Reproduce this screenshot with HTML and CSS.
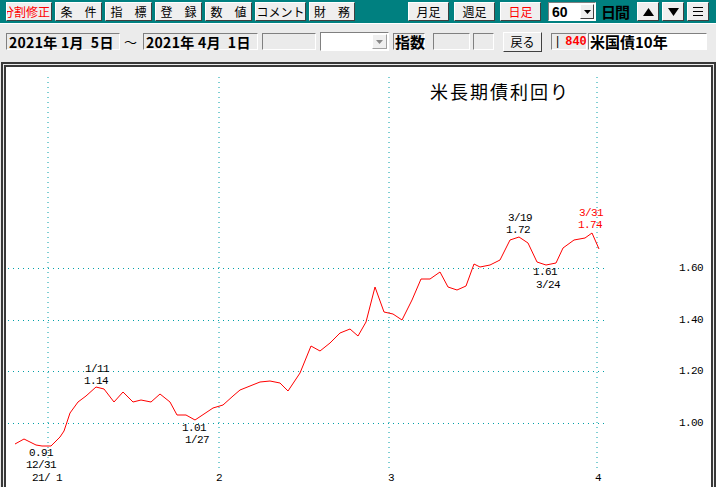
FILE: index.html
```html
<!DOCTYPE html>
<html lang="ja">
<head>
<meta charset="utf-8">
<title>米長期債利回り</title>
<link rel="stylesheet" href="styles.css">
</head>
<body>
<div class="topbar">
  <div class="group-left">
    <div class="tb-btn w46 red right">分割修正</div>
    <div class="tb-btn w47">条　件</div>
    <div class="tb-btn w47">指　標</div>
    <div class="tb-btn w47">登　録</div>
    <div class="tb-btn w47">数　値</div>
    <div class="tb-btn w51">コメント</div>
    <div class="tb-btn w46">財　務</div>
  </div>
  <div class="group-right">
    <div class="tb-btn w41">月足</div>
    <div class="tb-btn w41">週足</div>
    <div class="tb-btn w41 red">日足</div>
    <div class="select">
      <span class="select-val">60</span>
      <span class="select-arrow"><svg width="7" height="4" viewBox="0 0 7 4"><path d="M0 0H7L3.5 4Z" fill="#000"/></svg></span>
    </div>
    <div class="days">日間</div>
    <div class="tb-btn w22 arrows">
      <svg width="11" height="8" viewBox="0 0 11 8"><path d="M5.5 0L11 8H0Z" fill="#000"/></svg>
    </div>
    <div class="tb-btn w22 arrows">
      <svg width="11" height="8" viewBox="0 0 11 8"><path d="M0 0H11L5.5 8Z" fill="#000"/></svg>
    </div>
    <div class="tb-btn w22 arrows">
      <svg width="10" height="9" viewBox="0 0 10 9"><path d="M0 0.5H10M0 4.5H10M0 8.5H10" stroke="#000" stroke-width="1"/></svg>
    </div>
  </div>
</div>

<div class="row2">
  <div class="sunken date">2021年 1月  5日</div>
  <div class="tilde">～</div>
  <div class="sunken date date2">2021年 4月  1日</div>
  <div class="sunken empty1"></div>
  <div class="combo">
    <span class="combo-arrow"><svg width="7" height="4" viewBox="0 0 7 4"><path d="M0 0H7L3.5 4Z" fill="#888"/></svg></span>
  </div>
  <div class="sunken label">指数</div>
  <div class="sunken empty2"></div>
  <div class="sunken empty3"></div>
  <div class="back-btn">戻る</div>
  <div class="sunken code"><span class="bar">|</span><span class="num">840</span></div>
  <div class="sunken name">米国債10年</div>
</div>

<div class="chart">
  <svg class="plot" width="705" height="420" viewBox="6 67 705 420">
    <g class="grid" stroke="#00a0a8" stroke-width="1" stroke-dasharray="1 4" fill="none">
      <path d="M48 77V468M219 77V468M389 77V468M597 77V468"/>
      <path d="M8 268.5H607M8 320.5H607M8 371.5H607M8 423.5H607"/>
    </g>
    <polyline fill="none" stroke="#ff0000" stroke-width="1"
      points="15,444 24,439 30,442 36,445 42,446 51,446 60,437 64,431 70,413 78,402 86,396 96,387 104,389 114,402 123,392 133,402 141,400 151,402 160,394 170,402 177,415 186,415 195,420 204,414 213,408 223,405 233,396 240,390 250,386 260,382 270,381 280,383 288,391 300,373 311,346 320,351 330,343 340,333 350,329 358,336 366,322 375,287 384,312 393,314 402,320 412,300 421,279 430,279 440,272 448,287 457,290 466,286 474,264 480,267 490,265 500,260 510,240 519,237 528,243 537,262 546,265 556,263 563,248 574,240 585,238 592,233 599,249"/>
    <text class="title" x="430" y="91">米長期債利回り</text>
    <g class="lbl">
      <text x="97" y="369" text-anchor="middle">1/11</text>
      <text x="96" y="381" text-anchor="middle">1.14</text>
      <text x="41" y="453" text-anchor="middle">0.91</text>
      <text x="41" y="465" text-anchor="middle">12/31</text>
      <text x="32" y="478">21/ 1</text>
      <text x="194" y="428" text-anchor="middle">1.01</text>
      <text x="197" y="440" text-anchor="middle">1/27</text>
      <text x="520" y="218" text-anchor="middle">3/19</text>
      <text x="518" y="230" text-anchor="middle">1.72</text>
      <text x="591" y="213" text-anchor="middle" class="redtxt">3/31</text>
      <text x="590" y="225" text-anchor="middle" class="redtxt">1.74</text>
      <text x="545" y="272" text-anchor="middle">1.61</text>
      <text x="548" y="285" text-anchor="middle">3/24</text>
      <text x="219" y="478" text-anchor="middle">2</text>
      <text x="391" y="478" text-anchor="middle">3</text>
      <text x="598" y="478" text-anchor="middle">4</text>
      <text x="703" y="268" text-anchor="end">1.60</text>
      <text x="703" y="320" text-anchor="end">1.40</text>
      <text x="703" y="371" text-anchor="end">1.20</text>
      <text x="703" y="423" text-anchor="end">1.00</text>
    </g>
  </svg>
</div>
</body>
</html>
```

FILE: styles.css
```css
html, body {
  margin: 0;
  padding: 0;
}
body {
  width: 716px;
  height: 487px;
  overflow: hidden;
  background: #ebebeb;
  font-family: "Noto Sans CJK JP", "Noto Sans", sans-serif;
  color: #000;
}

/* top teal toolbar */
.topbar {
  height: 23px;
  background: #008080;
  border-bottom: 1px solid #ffffff;
  display: flex;
  align-items: center;
  padding-left: 6px;
}
.group-left {
  display: flex;
  gap: 3px;
}
.group-right {
  display: flex;
  align-items: center;
  margin-left: 53px;
  gap: 5px;
}
.tb-btn {
  height: 19px;
  box-sizing: border-box;
  border: 1px solid;
  border-color: #ffffff #404040 #404040 #ffffff;
  background: #efefef;
  font-size: 12px;
  line-height: 1;
  display: flex;
  align-items: center;
  justify-content: center;
  overflow: hidden;
  white-space: nowrap;
}
.tb-btn.right { justify-content: flex-end; padding-right: 1px; }
.red { color: #ff0000; }
.w46 { width: 46px; }
.w47 { width: 47px; }
.w51 { width: 51px; }
.w41 { width: 41px; }
.w22 { width: 22px; }
.arrows { margin-left: -2px; }

.select {
  width: 48px;
  height: 19px;
  box-sizing: border-box;
  margin-left: 2px;
  background: #ffffff;
  border: 1px solid;
  border-color: #808080 #ffffff #ffffff #808080;
  display: flex;
  align-items: center;
  justify-content: space-between;
}
.select-val {
  font-family: "Liberation Sans", sans-serif;
  font-weight: bold;
  font-size: 14px;
  padding-left: 3px;
}
.select-arrow {
  width: 14px;
  height: 15px;
  box-sizing: border-box;
  margin-right: 1px;
  background: #efefef;
  border: 1px solid;
  border-color: #ffffff #404040 #404040 #ffffff;
  display: flex;
  align-items: center;
  justify-content: center;
}
.days {
  font-size: 15px;
  font-weight: bold;
  color: #000;
  width: 33px;
  letter-spacing: -1px;
}

/* second row */
.row2 {
  height: 35px;
  display: flex;
  align-items: center;
  padding-left: 6px;
}
.sunken {
  height: 17px;
  box-sizing: border-box;
  border: 1px solid;
  border-color: #808080 #ffffff #ffffff #808080;
  display: flex;
  align-items: center;
  font-weight: bold;
  font-size: 14px;
  line-height: 1;
  white-space: pre;
  flex: none;
}
.date { width: 114px; padding-left: 2px; letter-spacing: 0.3px; }
.tilde {
  width: 23px;
  padding-left: 4px;
  box-sizing: border-box;
  font-size: 13px;
  flex: none;
}
.date2 { width: 115px; }
.empty1 { width: 54px; margin-left: 4px; }
.combo {
  width: 69px;
  height: 19px;
  box-sizing: border-box;
  margin-left: 4px;
  background: #ffffff;
  border: 1px solid;
  border-color: #808080 #ffffff #ffffff #808080;
  display: flex;
  justify-content: flex-end;
  align-items: center;
  flex: none;
}
.combo-arrow {
  width: 15px;
  height: 15px;
  box-sizing: border-box;
  margin-right: 1px;
  background: #efefef;
  border: 1px solid;
  border-color: #ffffff #a0a0a0 #a0a0a0 #ffffff;
  display: flex;
  align-items: center;
  justify-content: center;
}
.label { width: 32px; margin-left: 4px; font-size: 15px; padding-left: 1px; }
.empty2 { width: 37px; margin-left: 8px; }
.empty3 { width: 21px; margin-left: 3px; }
.back-btn {
  width: 39px;
  height: 20px;
  box-sizing: border-box;
  margin-left: 9px;
  border: 1px solid;
  border-color: #ffffff #404040 #404040 #ffffff;
  background: #efefef;
  font-size: 12px;
  display: flex;
  align-items: center;
  justify-content: center;
  flex: none;
}
.code {
  width: 36px;
  margin-left: 9px;
  font-family: "Liberation Mono", monospace;
  font-size: 12px;
  padding-left: 2px;
}
.code .bar { font-weight: normal; margin-right: 4px; }
.code .num { color: #ff0000; }
.name {
  width: 119px;
  margin-left: 1px;
  background: #ffffff;
  font-size: 15px;
  padding-left: 1px;
}

/* chart */
.chart {
  margin: 3px 0 0 1px;
  width: 705px;
  height: 420px;
  border: 5px double #383838;
  background: #ffffff;
  background-clip: padding-box;
}
.plot { display: block; }
.title {
  font-family: "Noto Sans CJK JP", sans-serif;
  font-size: 18px;
  letter-spacing: 2px;
  dominant-baseline: central;
  fill: #000;
}
.lbl text {
  font-family: "Liberation Mono", monospace;
  font-size: 11px;
  letter-spacing: -0.6px;
  dominant-baseline: central;
  fill: #000;
}
.lbl text.redtxt { fill: #ff0000; }
```
